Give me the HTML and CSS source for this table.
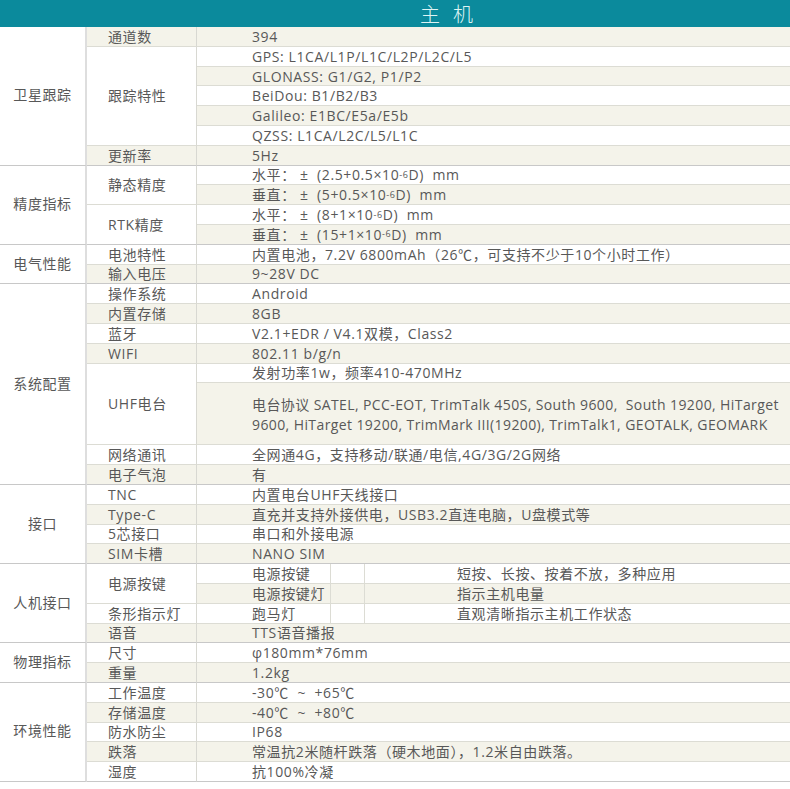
FILE: index.html
```html
<!DOCTYPE html>
<html lang="zh-CN">
<head>
<meta charset="utf-8">
<title>主机</title>
<link rel="stylesheet" href="styles.css">
</head>
<body>
<div class="sheet">
  <div class="head">主机</div>
  <div class="grid">
    <div class="cell c1 s7">卫星跟踪</div>
    <div class="cell c2 alt">通道数</div><div class="cell c3 alt">394</div>
    <div class="cell c2 s5">跟踪特性</div><div class="cell c3">GPS: L1CA/L1P/L1C/L2P/L2C/L5</div>
    <div class="cell c3 alt">GLONASS: G1/G2, P1/P2</div>
    <div class="cell c3">BeiDou: B1/B2/B3</div>
    <div class="cell c3 alt">Galileo: E1BC/E5a/E5b</div>
    <div class="cell c3">QZSS: L1CA/L2C/L5/L1C</div>
    <div class="cell c2 alt end">更新率</div><div class="cell c3 alt end">5Hz</div>

    <div class="cell c1 s4">精度指标</div>
    <div class="cell c2 s2">静态精度</div><div class="cell c3">水平：&nbsp;±&nbsp;&nbsp;(2.5+0.5×10<sup>-6</sup>D)&nbsp;&nbsp;mm</div>
    <div class="cell c3 alt">垂直：&nbsp;±&nbsp;&nbsp;(5+0.5×10<sup>-6</sup>D)&nbsp;&nbsp;mm</div>
    <div class="cell c2 s2 end">RTK精度</div><div class="cell c3">水平：&nbsp;±&nbsp;&nbsp;(8+1×10<sup>-6</sup>D)&nbsp;&nbsp;mm</div>
    <div class="cell c3 alt end">垂直：&nbsp;±&nbsp;&nbsp;(15+1×10<sup>-6</sup>D)&nbsp;&nbsp;mm</div>

    <div class="cell c1 s2">电气性能</div>
    <div class="cell c2">电池特性</div><div class="cell c3">内置电池，7.2V 6800mAh（26℃，可支持不少于10个小时工作）</div>
    <div class="cell c2 alt end">输入电压</div><div class="cell c3 alt end">9~28V DC</div>

    <div class="cell c1 s8">系统配置</div>
    <div class="cell c2">操作系统</div><div class="cell c3">Android</div>
    <div class="cell c2 alt">内置存储</div><div class="cell c3 alt">8GB</div>
    <div class="cell c2">蓝牙</div><div class="cell c3">V2.1+EDR / V4.1双模，Class2</div>
    <div class="cell c2 alt">WIFI</div><div class="cell c3 alt">802.11 b/g/n</div>
    <div class="cell c2 s2">UHF电台</div><div class="cell c3">发射功率1w，频率410-470MHz</div>
    <div class="cell c3 alt multi">电台协议 SATEL, PCC-EOT, TrimTalk 450S, South 9600,&nbsp; South 19200, HiTarget<br>9600, HiTarget 19200, TrimMark III(19200), TrimTalk1, GEOTALK, GEOMARK</div>
    <div class="cell c2">网络通讯</div><div class="cell c3">全网通4G，支持移动/联通/电信,4G/3G/2G网络</div>
    <div class="cell c2 alt end">电子气泡</div><div class="cell c3 alt end">有</div>

    <div class="cell c1 s4">接口</div>
    <div class="cell c2">TNC</div><div class="cell c3">内置电台UHF天线接口</div>
    <div class="cell c2 alt">Type-C</div><div class="cell c3 alt">直充并支持外接供电，USB3.2直连电脑，U盘模式等</div>
    <div class="cell c2">5芯接口</div><div class="cell c3">串口和外接电源</div>
    <div class="cell c2 alt end">SIM卡槽</div><div class="cell c3 alt end">NANO SIM</div>

    <div class="cell c1 s4">人机接口</div>
    <div class="cell c2 s2">电源按键</div>
    <div class="cell c3 split"><span class="sa">电源按键</span><span class="sb"></span><span class="sc">短按、长按、按着不放，多种应用</span></div>
    <div class="cell c3 split alt"><span class="sa">电源按键灯</span><span class="sb"></span><span class="sc">指示主机电量</span></div>
    <div class="cell c2">条形指示灯</div>
    <div class="cell c3 split"><span class="sa">跑马灯</span><span class="sb"></span><span class="sc">直观清晰指示主机工作状态</span></div>
    <div class="cell c2 alt end">语音</div><div class="cell c3 alt end">TTS语音播报</div>

    <div class="cell c1 s2">物理指标</div>
    <div class="cell c2">尺寸</div><div class="cell c3">φ180mm*76mm</div>
    <div class="cell c2 alt end">重量</div><div class="cell c3 alt end">1.2kg</div>

    <div class="cell c1 s5">环境性能</div>
    <div class="cell c2">工作温度</div><div class="cell c3">-30℃&nbsp; ~&nbsp; +65℃</div>
    <div class="cell c2 alt">存储温度</div><div class="cell c3 alt">-40℃&nbsp; ~&nbsp; +80℃</div>
    <div class="cell c2">防水防尘</div><div class="cell c3">IP68</div>
    <div class="cell c2 alt">跌落</div><div class="cell c3 alt">常温抗2米随杆跌落（硬木地面），1.2米自由跌落。</div>
    <div class="cell c2 end">湿度</div><div class="cell c3 end">抗100%冷凝</div>
  </div>
</div>
</body>
</html>
```
FILE: styles.css
```css
html, body {
  margin: 0;
  padding: 0;
  background: #ffffff;
}
body {
  font-family: "Open Sans", "Noto Sans CJK SC", sans-serif;
  font-size: 14px;
  color: #585858;
}
.sheet {
  width: 790px;
}
.head {
  display: flex;
  align-items: center;
  height: 27px;
  background: #0b8a9c;
  color: #def4f4;
  font-family: "Noto Sans CJK SC", sans-serif;
  font-weight: 300;
  font-size: 20px;
  line-height: 27px;
  letter-spacing: 13px;
  padding-left: 420px;
  box-sizing: border-box;
  overflow: visible;
}
.grid {
  display: grid;
  grid-template-columns: 87px 110px 1fr;
  grid-template-rows: repeat(18, 19.8px) 62px repeat(17, 19.8px);
  letter-spacing: 0.6px;
}
.cell {
  display: flex;
  align-items: center;
  box-sizing: border-box;
  border-bottom: 1px solid #dcdcd4;
  white-space: nowrap;
  overflow: hidden;
  line-height: 19px;
}
.c1 {
  grid-column: 1;
  justify-content: center;
  border-right: 2px solid #dedede;
  border-bottom-color: #c8c8c8;
  padding-bottom: 2px;
}
.c2 {
  grid-column: 2;
  padding-left: 21px;
  border-right: 1px solid #d8d8d2;
}
.c3 {
  grid-column: 3;
  padding-left: 55px;
}
.alt {
  background: #f4f3ea;
}
.end {
  border-bottom-color: #c8c8c8;
}
.s2 { grid-row: span 2; }
.s4 { grid-row: span 4; }
.s5 { grid-row: span 5; }
.s7 { grid-row: span 7; }
.s8 { grid-row: span 8; }
.multi {
  white-space: normal;
  line-height: 20px;
  padding-top: 3px;
  letter-spacing: 0.4px;
}
sup {
  font-size: 9px;
  line-height: 0;
  vertical-align: 6px;
}
.split {
  padding-left: 0;
  align-items: stretch;
}
.split span {
  display: flex;
  align-items: center;
  box-sizing: border-box;
}
.sa {
  width: 134px;
  padding-left: 55px;
  border-right: 1px solid #dcdcd4;
}
.sb {
  width: 34px;
  border-right: 1px solid #dcdcd4;
}
.sc {
  padding-left: 92px;
}
```
